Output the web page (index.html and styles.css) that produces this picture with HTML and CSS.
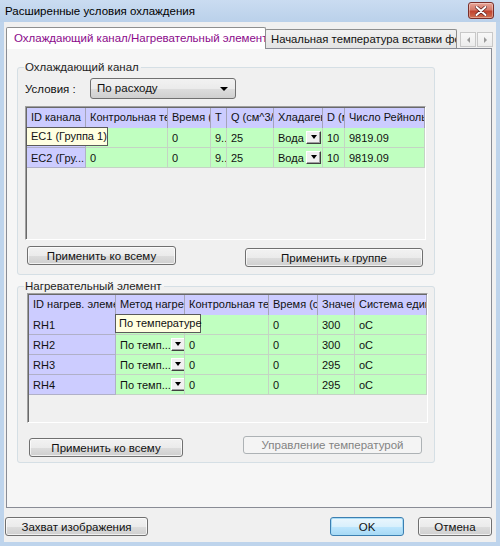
FILE: index.html
```html
<!DOCTYPE html>
<html lang="ru">
<head>
<meta charset="utf-8">
<title>Расширенные условия охлаждения</title>
<link rel="stylesheet" href="styles.css">
</head>
<body>
<div class="window">
  <div class="titlebar">
    <span class="title">Расширенные условия охлаждения</span>
    <div class="close">
      <svg width="12" height="10" viewBox="0 0 12 10"><path d="M1.5 1 L10.5 9 M10.5 1 L1.5 9" stroke="#5a1d1d" stroke-width="3.4" stroke-linecap="round"/><path d="M1.5 1 L10.5 9 M10.5 1 L1.5 9" stroke="#ffffff" stroke-width="2" stroke-linecap="round"/></svg>
    </div>
  </div>
  <div class="client">
    <div class="tabstrip">
      <div class="tab active">Охлаждающий канал/Нагревательный элемент</div>
      <div class="tab">Начальная температура вставки формы</div>
      <div class="tabscroll">
        <span class="sbtn"><span class="tri-l"></span></span>
        <span class="sbtn"><span class="tri-r"></span></span>
      </div>
    </div>
    <div class="panel">
      <fieldset class="group g1">
        <legend>Охлаждающий канал</legend>
        <div class="cond-row">
          <span class="cond-label">Условия :</span>
          <div class="combo">По расходу<span class="caret"></span></div>
        </div>
        <div class="grid grid1">
          <div class="hd">ID канала</div>
          <div class="hd">Контрольная температура</div>
          <div class="hd">Время (с)</div>
          <div class="hd">T</div>
          <div class="hd">Q (см^3/с)</div>
          <div class="hd">Хладагент</div>
          <div class="hd">D (мм)</div>
          <div class="hd">Число Рейнольдса</div>

          <div class="c id tipcell"><span class="tip tip1">EC1 (Группа 1)</span></div>
          <div class="c"></div>
          <div class="c">0</div>
          <div class="c">9..</div>
          <div class="c">25</div>
          <div class="c cb">Вода<span class="ddb"><span class="ddt"></span></span></div>
          <div class="c">10</div>
          <div class="c">9819.09</div>

          <div class="c id">EC2 (Гру...</div>
          <div class="c">0</div>
          <div class="c">0</div>
          <div class="c">9..</div>
          <div class="c">25</div>
          <div class="c cb">Вода<span class="ddb"><span class="ddt"></span></span></div>
          <div class="c">10</div>
          <div class="c">9819.09</div>
        </div>
        <div class="btn-row row1">
          <button class="btn b-all1">Применить ко всему</button>
          <button class="btn b-grp">Применить к группе</button>
        </div>
      </fieldset>

      <fieldset class="group g2">
        <legend>Нагревательный элемент</legend>
        <div class="grid grid2">
          <div class="hd">ID нагрев. элемента</div>
          <div class="hd">Метод нагрева</div>
          <div class="hd">Контрольная температура</div>
          <div class="hd">Время (с)</div>
          <div class="hd">Значение</div>
          <div class="hd">Система единиц</div>

          <div class="c id">RH1</div>
          <div class="c tipcell"><span class="tip tip2">По температуре</span></div>
          <div class="c"></div>
          <div class="c">0</div>
          <div class="c">300</div>
          <div class="c">oC</div>

          <div class="c id">RH2</div>
          <div class="c cb">По темп...<span class="ddb"><span class="ddt"></span></span></div>
          <div class="c">0</div>
          <div class="c">0</div>
          <div class="c">300</div>
          <div class="c">oC</div>

          <div class="c id">RH3</div>
          <div class="c cb">По темп...<span class="ddb"><span class="ddt"></span></span></div>
          <div class="c">0</div>
          <div class="c">0</div>
          <div class="c">295</div>
          <div class="c">oC</div>

          <div class="c id">RH4</div>
          <div class="c cb">По темп...<span class="ddb"><span class="ddt"></span></span></div>
          <div class="c">0</div>
          <div class="c">0</div>
          <div class="c">295</div>
          <div class="c">oC</div>
        </div>
        <div class="btn-row row2">
          <button class="btn b-all2">Применить ко всему</button>
          <button class="btn b-temp" disabled>Управление температурой</button>
        </div>
      </fieldset>
    </div>
    <div class="footer">
      <button class="btn b-cap">Захват изображения</button>
      <div class="footer-right">
        <button class="btn b-ok">OK</button>
        <button class="btn b-cancel">Отмена</button>
      </div>
    </div>
  </div>
</div>
</body>
</html>
```

FILE: styles.css
```css
* { box-sizing: border-box; }
html, body { margin: 0; padding: 0; }
body {
  width: 500px;
  height: 546px;
  overflow: hidden;
  background: #bed4ec;
  font-family: "Liberation Sans", Arial, sans-serif;
  font-size: 11px;
  color: #111;
}
.window {
  display: flex;
  flex-direction: column;
  height: 546px;
}
.titlebar {
  height: 22px;
  flex: none;
  display: flex;
  align-items: flex-start;
  justify-content: space-between;
  padding: 0 6px 0 5px;
  background: linear-gradient(#cadcf1, #bad1ea);
}
.title {
  font-size: 11.5px;
  line-height: 22px;
  color: #000;
}
.close {
  margin-top: 2px;
  width: 26px;
  height: 17px;
  border: 1px solid #7a2f2a;
  border-radius: 3px;
  background: linear-gradient(#e8a598 0%, #d47a6a 45%, #c0432f 55%, #d07050 100%);
  display: flex;
  align-items: center;
  justify-content: center;
  box-shadow: inset 0 0 0 1px rgba(255,255,255,0.35);
}
.client {
  flex: 1;
  margin: 0 4px 4px 4px;
  background: #f0f0f0;
  display: flex;
  flex-direction: column;
}
.tabstrip {
  height: 26px;
  flex: none;
  display: flex;
  align-items: flex-end;
  padding-left: 2px;
  position: relative;
  z-index: 1;
}
.tab {
  height: 19px;
  line-height: 18px;
  padding: 0 0 0 6px;
  white-space: nowrap;
  overflow: hidden;
  border: 1px solid #8e8f8f;
  border-bottom: none;
  border-radius: 2px 2px 0 0;
  background: linear-gradient(#f2f2f2, #e3e3e3);
  font-size: 11.5px;
}
.tab.active {
  width: 260px;
  height: 22px;
  line-height: 21px;
  margin-bottom: -1px;
  background: #ffffff;
  color: #8b0a8b;
  padding-left: 7px;
}
.tab:not(.active) {
  width: 192px;
  margin-left: -1px;
  padding-left: 5px;
  font-size: 11.3px;
}
.tabscroll {
  display: flex;
  gap: 1px;
  margin-left: 3px;
  margin-bottom: 1px;
}
.sbtn {
  width: 16px;
  height: 15px;
  border: 1px solid #c8c8c8;
  background: linear-gradient(#f8f8f8, #ececec);
  display: flex;
  align-items: center;
  justify-content: center;
}
.tri-l, .tri-r { width: 0; height: 0; border-top: 3px solid transparent; border-bottom: 3px solid transparent; }
.tri-l { border-right: 3px solid #9a9a9a; }
.tri-r { border-left: 3px solid #9a9a9a; }

.panel {
  flex: none;
  margin-left: 2px;
  width: 486px;
  height: 460px;
  border: 1px solid #898c95;
  background: #f6f6f6;
  padding: 11px 0 0 10px;
  display: flex;
  flex-direction: column;
}
.group {
  margin: 0;
  padding: 0;
  border: 1px solid #d5dfe5;
  border-radius: 3px;
  width: 418px;
  background: #f0f0f0;
}
.group legend {
  margin-left: 6px;
  padding: 0 2px 0 1px;
  font-size: 11.5px;
  line-height: 14px;
  color: #1e1e1e;
}
.g1 { height: 215px; }
.g2 { height: 184px; margin-top: 4px; }

.cond-row {
  display: flex;
  align-items: center;
  margin: 4px 0 0 7px;
  height: 21px;
}
.cond-label { width: 65px; font-size: 11.5px; }
.combo {
  width: 146px;
  height: 21px;
  border: 1px solid #707070;
  border-radius: 3px;
  background: linear-gradient(#f2f2f2 0%, #ebebeb 50%, #dddddd 51%, #cfcfcf 100%);
  padding-left: 6px;
  line-height: 19px;
  display: flex;
  justify-content: space-between;
  align-items: center;
  padding-right: 7px;
  font-size: 11.5px;
}
.caret {
  width: 0; height: 0;
  border-left: 4px solid transparent;
  border-right: 4px solid transparent;
  border-top: 4px solid #000;
}

.grid {
  display: grid;
  grid-auto-rows: 20px;
  align-content: start;
  border: 1px solid;
  border-color: #a0a0a0 #ffffff #ffffff #a0a0a0;
  box-shadow: inset 1px 1px 0 #696969;
  padding: 1px 0 0 1px;
  background: #f0f0f0;
}
.grid1 {
  width: 401px;
  height: 134px;
  margin: 7px 0 0 7px;
  grid-template-columns: 59px 82px 43px 16px 47px 49px 22px 80px;
}
.grid2 {
  width: 401px;
  height: 130px;
  margin: 0 0 0 9px;
  grid-template-columns: 87px 69px 84px 49px 37px 72px;
}
.hd, .c {
  white-space: nowrap;
  overflow: hidden;
  padding-left: 4px;
  line-height: 20px;
  font-size: 11px;
}
.hd {
  background: #ccccff;
  border-right: 1px solid #a4a4b8;
  border-bottom: 1px solid #8c8ca0;
  line-height: 19px;
  height: 21px;
}
.c {
  background: #c0ffc0;
  border-right: 1px solid #c4d4c4;
  border-bottom: 1px solid #c4d4c4;
}
.c.id { background: #ccccff; border-color: #b0b0c8; }
.tipcell { position: relative; overflow: visible; }
.tip {
  position: absolute;
  left: -1px;
  top: -1px;
  height: 19px;
  line-height: 17px;
  padding-left: 4px;
  background: #ffffe1;
  border: 1px solid #5a5a5a;
  z-index: 2;
  white-space: nowrap;
}
.tip1 { width: 82px; padding-left: 4px; }
.tip2 { width: 86px; padding-left: 3px; }
.cb {
  display: flex;
  align-items: center;
  padding-left: 4px;
}
.ddb {
  width: 15px;
  height: 13px;
  flex: none;
  margin-left: auto;
  margin-right: 1px;
  background: #f0f0f0;
  border: 1px solid;
  border-color: #ffffff #404040 #404040 #ffffff;
  box-shadow: inset -1px -1px 0 #a0a0a0;
  display: flex;
  align-items: center;
  justify-content: center;
}
.ddt {
  width: 0; height: 0;
  border-left: 3.5px solid transparent;
  border-right: 3.5px solid transparent;
  border-top: 4px solid #000;
  margin-top: -1px;
}

.btn-row {
  display: flex;
  align-items: flex-start;
}
.row1 { margin: 6px 0 0 9px; }
.row2 { margin: 13px 0 0 11px; }
.btn {
  font-family: "Liberation Sans", Arial, sans-serif;
  font-size: 11.5px;
  color: #111;
  height: 19px;
  padding: 0;
  border: 1px solid #707070;
  border-radius: 3px;
  background: linear-gradient(#f2f2f2 0%, #ebebeb 50%, #dddddd 51%, #cfcfcf 100%);
  box-shadow: inset 0 0 0 1px rgba(255,255,255,0.7);
}
.b-all1 { width: 149px; }
.b-grp { width: 178px; margin: 2px 0 0 69px; }
.b-all2 { width: 154px; margin-top: 2px; }
.b-temp {
  width: 179px;
  margin-left: 60px;
  height: 18px;
  border-color: #adb2b5;
  background: #f4f4f4;
  color: #838383;
  box-shadow: none;
}
.footer {
  flex: 1;
  display: flex;
  justify-content: space-between;
  align-items: flex-start;
  padding: 9px 4px 0 1px;
}
.footer-right { display: flex; gap: 14px; }
.b-cap { width: 143px; }
.b-ok {
  width: 74px;
  border-color: #3c7fb1;
  box-shadow: inset 0 0 0 1px #a8dcf6;
  background: linear-gradient(#eaf6fd 0%, #d9f0fc 50%, #bee6fd 51%, #a7d9f5 100%);
}
.b-cancel { width: 74px; }
```
